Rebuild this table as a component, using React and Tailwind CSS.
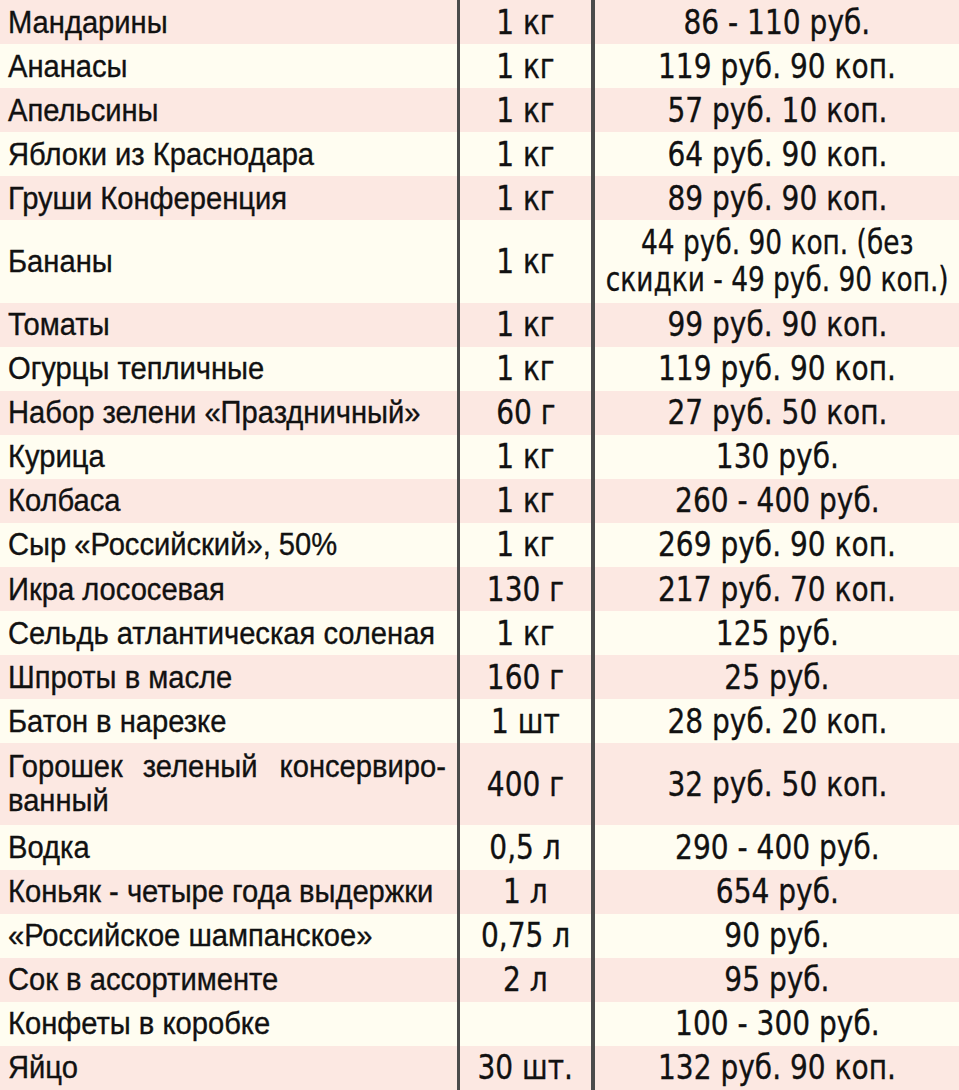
const rows = [
  { name: "Мандарины", qty: "1 кг", price: "86 - 110 руб." },
  { name: "Ананасы", qty: "1 кг", price: "119 руб. 90 коп." },
  { name: "Апельсины", qty: "1 кг", price: "57 руб. 10 коп." },
  { name: "Яблоки из Краснодара", qty: "1 кг", price: "64 руб. 90 коп." },
  { name: "Груши Конференция", qty: "1 кг", price: "89 руб. 90 коп." },
  { name: "Бананы", qty: "1 кг", price: ["44 руб. 90 коп. (без", "скидки - 49 руб. 90 коп.)"], tall: true },
  { name: "Томаты", qty: "1 кг", price: "99 руб. 90 коп." },
  { name: "Огурцы тепличные", qty: "1 кг", price: "119 руб. 90 коп." },
  { name: "Набор зелени «Праздничный»", qty: "60 г", price: "27 руб. 50 коп." },
  { name: "Курица", qty: "1 кг", price: "130 руб." },
  { name: "Колбаса", qty: "1 кг", price: "260 - 400 руб." },
  { name: "Сыр «Российский», 50%", qty: "1 кг", price: "269 руб. 90 коп." },
  { name: "Икра лососевая", qty: "130 г", price: "217 руб. 70 коп." },
  { name: "Сельдь атлантическая соленая", qty: "1 кг", price: "125 руб." },
  { name: "Шпроты в масле", qty: "160 г", price: "25 руб." },
  { name: "Батон в нарезке", qty: "1 шт", price: "28 руб. 20 коп." },
  { name: "peas", qty: "400 г", price: "32 руб. 50 коп.", tall: true },
  { name: "Водка", qty: "0,5 л", price: "290 - 400 руб." },
  { name: "Коньяк - четыре года выдержки", qty: "1 л", price: "654 руб." },
  { name: "«Российское шампанское»", qty: "0,75 л", price: "90 руб." },
  { name: "Сок в ассортименте", qty: "2 л", price: "95 руб." },
  { name: "Конфеты в коробке", qty: "", price: "100 - 300 руб." },
  { name: "Яйцо", qty: "30 шт.", price: "132 руб. 90 коп." },
];

const App = () => {
  return (
    <div className="w-[959px] h-[1090px] flex flex-col bg-[#fffdf1] text-[#111111] [-webkit-text-stroke:0.35px_#111111] leading-none overflow-hidden">
      {rows.map((r, i) => (
        <div
          key={i}
          className={`grid grid-cols-[457px_134px_minmax(0,1fr)] ${r.tall ? "flex-[82_82_0%]" : "flex-[44_44_0%]"} ${
            i % 2 === 0 ? "bg-[#fce8e2]" : "bg-[#fffdf1]"
          }`}
        >
          {/* name */}
          <div className="flex flex-col justify-center min-w-0 pl-2 pr-[11px] whitespace-nowrap text-[31px] font-['Liberation_Sans',sans-serif]">
            {r.name === "peas" ? (
              <>
                <div className="flex justify-between leading-[34px]">
                  <span className="scale-x-[0.94] origin-left">Горошек</span>
                  <span className="scale-x-[0.94]">зеленый</span>
                  <span className="scale-x-[0.94] origin-right">консервиро-</span>
                </div>
                <span className="leading-[34px] scale-x-[0.94] origin-left">ванный</span>
              </>
            ) : (
              <span className="scale-x-[0.94] origin-left">{r.name}</span>
            )}
          </div>
          {/* qty */}
          <div className="flex items-center justify-center min-w-0 border-l-[3px] border-[#4b4b4b] whitespace-nowrap text-[33px] font-['DejaVu_Sans',sans-serif]">
            <span className="scale-x-[0.85]">{r.qty}</span>
          </div>
          {/* price */}
          <div className="flex flex-col items-center justify-center min-w-0 border-l-[4px] border-[#4b4b4b] text-center whitespace-nowrap text-[33px] font-['DejaVu_Sans',sans-serif]">
            {Array.isArray(r.price) ? (
              r.price.map((line) => (
                <span key={line} className="leading-[37px] scale-x-[0.8]">
                  {line}
                </span>
              ))
            ) : (
              <span className="scale-x-[0.85]">{r.price}</span>
            )}
          </div>
        </div>
      ))}
    </div>
  );
};

export default App;
